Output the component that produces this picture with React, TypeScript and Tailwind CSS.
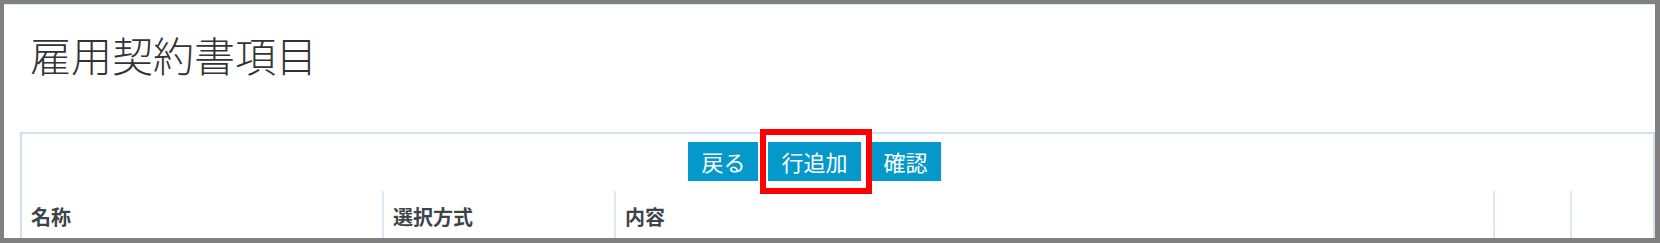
import React from 'react';

const font = { fontFamily: '"Noto Sans CJK JP", "Noto Sans", sans-serif' };

const cols = [
  { label: '名称', w: 'w-[360px]' },
  { label: '選択方式', w: 'w-[232px]' },
  { label: '内容', w: 'w-[879px]' },
  { label: '', w: 'w-[77px]' },
  { label: '', w: 'flex-1' },
];

export default function App() {
  return (
    <div
      className="h-[243px] w-[1660px] overflow-hidden border-t-4 border-l-4 border-r-[5px] border-b-[5px] border-[#808080] bg-white"
      style={font}
    >
      <div className="h-full border-t border-[#dbe8f5]">
        <h1 className="pl-[26px] pt-[29px] text-[41px] font-light leading-[41px] text-[#333]">雇用契約書項目</h1>

        {/* panel */}
        <div className="ml-4 mt-[57px] border-t-2 border-l-2 border-r-2 border-[#cfe0f1]">
          <div className="flex justify-center pr-[46px] pt-2 gap-[10px]">
            <button className="h-[39px] bg-[#0599cb] px-[13px] text-[22px] leading-[39px] text-white">戻る</button>
            <button className="relative h-[39px] bg-[#0599cb] px-[13px] text-[22px] leading-[39px] text-white">
              行追加
              <span className="absolute -left-2 -right-[11px] -top-[13px] -bottom-[13px] border-[6px] border-[#ff0000]" />
            </button>
            <button className="h-[39px] bg-[#0599cb] px-[13px] text-[22px] leading-[39px] text-white">確認</button>
          </div>

          <div className="mt-[10px] flex h-[60px]">
            {cols.map((c, i) => (
              <div
                key={i}
                className={`${c.w} ${i > 0 ? 'border-l-2 border-[#dbe9f6]' : ''} pl-[9px] pt-[12px] text-[20px] font-bold leading-[28px] text-[#3d4348]`}
              >
                {c.label}
              </div>
            ))}
          </div>
        </div>
      </div>
    </div>
  );
}
